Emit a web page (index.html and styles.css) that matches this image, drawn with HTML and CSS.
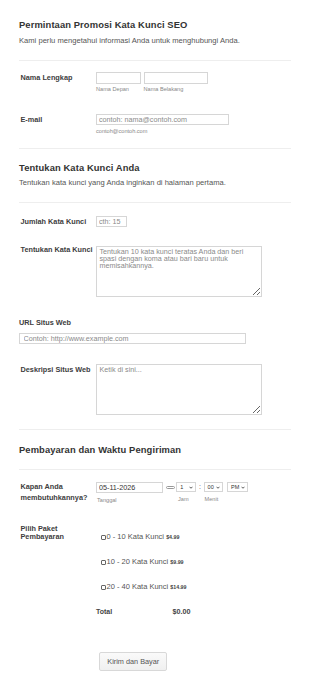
FILE: index.html
```html
<!DOCTYPE html>
<html lang="id">
  <head>
    <meta charset="UTF-8" />
    <meta name="viewport" content="width=device-width, initial-scale=1.0" />
    <title>Permintaan Promosi Kata Kunci SEO</title>
    <link rel="stylesheet" href="styles.css">
  </head>
  <body>
    <form class="form">
      <!-- Header -->
      <div class="head head-first">
        <h2>Permintaan Promosi Kata Kunci SEO</h2>
        <p>Kami perlu mengetahui informasi Anda untuk menghubungi Anda.</p>
      </div>
      <hr class="divider" />

      <!-- Full name -->
      <div class="row row-name">
        <label class="label">Nama Lengkap</label>
        <div class="field pair">
          <div>
            <input type="text" class="input input-first" />
            <div class="sub">Nama Depan</div>
          </div>
          <div>
            <input type="text" class="input input-last" />
            <div class="sub">Nama Belakang</div>
          </div>
        </div>
      </div>

      <!-- Email -->
      <div class="row row-email">
        <label class="label">E-mail</label>
        <div class="field">
          <input type="email" class="input input-email" placeholder="contoh: nama@contoh.com" />
          <div class="sub">contoh@contoh.com</div>
        </div>
      </div>

      <hr class="divider divider-2" />
      <div class="head head-2">
        <h2>Tentukan Kata Kunci Anda</h2>
        <p>Tentukan kata kunci yang Anda inginkan di halaman pertama.</p>
      </div>
      <hr class="divider divider-3" />

      <div class="row row-count">
        <label class="label">Jumlah Kata Kunci</label>
        <div class="field">
          <input type="text" class="input input-count" placeholder="cth: 15" />
        </div>
      </div>

      <div class="row row-keywords">
        <label class="label label-tight">Tentukan Kata Kunci</label>
        <div class="field">
          <textarea class="textarea" placeholder="Tentukan 10 kata kunci teratas Anda dan beri spasi dengan koma atau bari baru untuk memisahkannya."></textarea>
        </div>
      </div>

      <!-- Website url, label on top -->
      <div class="block-url">
        <label class="label label-top">URL Situs Web</label>
        <input type="text" class="input input-url" placeholder="Contoh: http://www.example.com" />
      </div>

      <div class="row row-desc">
        <label class="label">Deskripsi Situs Web</label>
        <div class="field">
          <textarea class="textarea" placeholder="Ketik di sini..."></textarea>
        </div>
      </div>

      <hr class="divider divider-4" />
      <div class="head head-3">
        <h2>Pembayaran dan Waktu Pengiriman</h2>
      </div>
      <hr class="divider divider-5" />

      <!-- Date and time -->
      <div class="row row-date">
        <label class="label label-date">Kapan Anda membutuhkannya?</label>
        <div class="field datetime">
          <div class="date-col">
            <input type="text" class="input input-date" value="05-11-2026" />
            <div class="sub sub-date">Tanggal</div>
          </div>
          <span class="cal-icon"></span>
          <div class="time-col">
            <div class="select select-hour"><span>1</span><svg viewBox="0 0 8 5"><path d="M1 1l3 3 3-3" /></svg></div>
            <div class="sub sub-date sub-time">Jam</div>
          </div>
          <span class="colon">:</span>
          <div class="time-col">
            <div class="select select-min"><span>00</span><svg viewBox="0 0 8 5"><path d="M1 1l3 3 3-3" /></svg></div>
            <div class="sub sub-date">Menit</div>
          </div>
          <div class="time-col">
            <div class="select select-ampm"><span>PM</span><svg viewBox="0 0 8 5"><path d="M1 1l3 3 3-3" /></svg></div>
          </div>
        </div>
      </div>

      <!-- Packages -->
      <div class="row row-package">
        <label class="label label-package">Pilih Paket Pembayaran</label>
        <div class="field options">
          <div class="option"><span class="check"></span>0 - 10 Kata Kunci <b class="price">$4.99</b></div>
          <div class="option"><span class="check"></span>10 - 20 Kata Kunci <b class="price">$9.99</b></div>
          <div class="option"><span class="check"></span>20 - 40 Kata Kunci <b class="price">$14.99</b></div>
          <div class="total"><span class="total-label">Total</span><span class="total-value">$0.00</span></div>
        </div>
      </div>

      <button type="button" class="submit">Kirim dan Bayar</button>
    </form>
  </body>
</html>
```

FILE: styles.css
```css
body {
  margin: 0;
  font-family: "Liberation Sans", Arial, sans-serif;
  color: #555;
  background: #fff;
}

.form {
  padding: 19px 19px 0;
}

/* Section headers */
.head h2 {
  margin: 0;
  font-size: 9.4px;
  line-height: 12px;
  letter-spacing: 0.1px;
  color: #333;
}

.head p {
  margin: 5px 0 0;
  font-size: 7.6px;
  line-height: 10px;
  color: #555;
}

.head-2 {
  margin-top: 13px;
}

.head-2 p {
  margin-top: 4px;
}

.head-3 {
  margin-top: 13.7px;
}

.divider {
  height: 0;
  margin: 14px 0 0;
  border: none;
  border-top: 1px solid #eee;
}

.divider-2 {
  margin-top: 13px;
}

.divider-4 {
  margin-top: 14.3px;
}

.divider-5 {
  margin-top: 13.3px;
}

/* Rows: label column + field column */
.row {
  display: flex;
  align-items: flex-start;
}

.label {
  width: 75.5px;
  padding-left: 1.5px;
  flex-shrink: 0;
  font-size: 7.3px;
  line-height: 11px;
  font-weight: bold;
  color: #3d3d3d;
}

.label-tight {
  line-height: 8px;
}

.label-top {
  display: block;
  width: auto;
  padding-left: 0;
}

.label-date {
  margin-top: -1.5px;
}

.label-package {
  line-height: 8.4px;
}

.row-name { margin-top: 11px; }
.row-email { margin-top: 20.5px; }
.row-count { margin-top: 13px; }
.row-keywords { margin-top: 18.5px; }
.row-desc { margin-top: 19.3px; }
.row-date { margin-top: 12.4px; }
.row-package { margin-top: 20.5px; }

.block-url {
  margin-top: 20.5px;
}

.pair {
  display: flex;
  gap: 2.5px;
}

.input {
  display: block;
  box-sizing: border-box;
  height: 11.5px;
  margin: 0;
  padding: 0 2px;
  border: 1px solid #d6d6d6;
  border-radius: 0;
  font-family: "Liberation Sans", Arial, sans-serif;
  font-size: 7.2px;
  color: #333;
  background: #fff;
  outline: none;
}

.input::placeholder,
.textarea::placeholder {
  color: #8a8a8a;
}

.input-first { width: 45px; }
.input-last { width: 64.5px; }
.input-email { width: 133px; }
.input-count { width: 31px; }

.input-url {
  width: 227px;
  height: 11.7px;
  margin: 4.8px 0 0 -0.5px;
  padding-left: 4px;
}

.sub {
  margin-top: 2.5px;
  font-size: 5.6px;
  line-height: 7px;
  color: #888;
}

.textarea {
  display: block;
  box-sizing: border-box;
  width: 165.5px;
  height: 51px;
  margin: 0;
  padding: 1.2px 2.5px;
  border: 1px solid #d6d6d6;
  font-family: "Liberation Sans", Arial, sans-serif;
  font-size: 7.2px;
  line-height: 7px;
  color: #333;
  outline: none;
}

/* Date & time */
.datetime {
  display: flex;
  align-items: flex-start;
}

.input-date {
  width: 67px;
  height: 10.7px;
}

.sub-date {
  margin-top: 4px;
  padding-left: 1px;
}

.sub-time {
  padding-left: 1.7px;
}

.cal-icon {
  width: 8.3px;
  height: 3px;
  box-sizing: border-box;
  margin: 4px 1.7px 0 3.3px;
  border: 0.8px solid #999;
  border-radius: 2px;
}

.select {
  display: flex;
  align-items: center;
  justify-content: space-between;
  box-sizing: border-box;
  height: 10px;
  padding: 0 2px 0 3px;
  border: 1px solid #d6d6d6;
  font-size: 5.5px;
  color: #333;
}

.select svg {
  width: 4px;
  height: 3px;
  fill: none;
  stroke: #333;
  stroke-width: 1.6;
}

.select-hour { width: 20px; }
.select-min { width: 19.5px; }
.select-ampm { width: 21px; margin-left: 4px; }

.colon {
  width: 7.3px;
  text-align: center;
  font-size: 7px;
  line-height: 10px;
  color: #555;
}

/* Package options */
.options {
  padding-top: 7.7px;
}

.option {
  padding-left: 5px;
  height: 10px;
  line-height: 10px;
  margin-bottom: 15px;
  font-size: 7.5px;
  color: #555;
}

.option .price {
  font-size: 5.3px;
  color: #444;
}

.check {
  display: inline-block;
  box-sizing: border-box;
  width: 5px;
  height: 5px;
  margin-right: 0.5px;
  vertical-align: -0.5px;
  border: 0.7px solid #666;
  border-radius: 1px;
}

.total {
  display: flex;
  margin-top: 4.4px;
  font-size: 7px;
  line-height: 10px;
  font-weight: bold;
  color: #444;
}

.total-label {
  width: 76.5px;
}

.total-value {
  font-size: 7.2px;
}

.submit {
  display: block;
  box-sizing: border-box;
  width: 68px;
  height: 18.3px;
  margin: 35px 0 0 80.3px;
  padding: 0;
  border: 1px solid #d8d8d8;
  border-radius: 2px;
  background: linear-gradient(#fafafa, #f0f0f0);
  font-family: "Liberation Sans", Arial, sans-serif;
  font-size: 7.3px;
  color: #555;
  cursor: pointer;
}
```
